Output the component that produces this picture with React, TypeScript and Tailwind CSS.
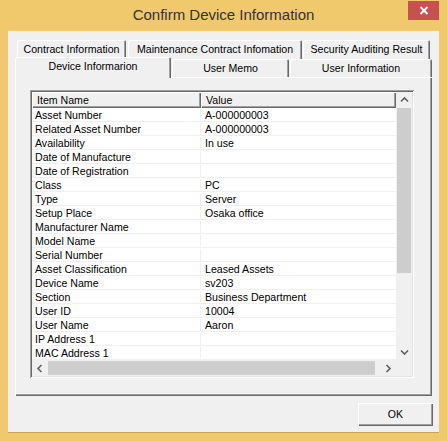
import React from 'react';

type Row = { name: string; value: string };

const rows: Row[] = [
  { name: 'Asset Number', value: 'A-000000003' },
  { name: 'Related Asset Number', value: 'A-000000003' },
  { name: 'Availability', value: 'In use' },
  { name: 'Date of Manufacture', value: '' },
  { name: 'Date of Registration', value: '' },
  { name: 'Class', value: 'PC' },
  { name: 'Type', value: 'Server' },
  { name: 'Setup Place', value: 'Osaka office' },
  { name: 'Manufacturer Name', value: '' },
  { name: 'Model Name', value: '' },
  { name: 'Serial Number', value: '' },
  { name: 'Asset Classification', value: 'Leased Assets' },
  { name: 'Device Name', value: 'sv203' },
  { name: 'Section', value: 'Business Department' },
  { name: 'User ID', value: '10004' },
  { name: 'User Name', value: 'Aaron' },
  { name: 'IP Address 1', value: '' },
  { name: 'MAC Address 1', value: '' },
];

const tabShadow =
  'shadow-[inset_1px_1px_0_#ffffff,inset_-1px_0_0_#696969,inset_-2px_0_0_#a0a0a0]';

function Chevron({ dir }: { dir: 'up' | 'down' | 'left' | 'right' }) {
  const pts = {
    up: '1,5.5 4.5,2 8,5.5',
    down: '1,2.5 4.5,6 8,2.5',
    left: '5.5,1 2,4.5 5.5,8',
    right: '2.5,1 6,4.5 2.5,8',
  }[dir];
  return (
    <svg width="9" height="9" viewBox="0 0 9 9">
      <polyline points={pts} fill="none" stroke="#606060" strokeWidth="1.6" />
    </svg>
  );
}

function BackTab({ label, width, ml }: { label: string; width: string; ml: string }) {
  return (
    <div
      className={`${width} ${ml} h-[19px] rounded-t-[2px] bg-[#f0f0f0] ${tabShadow} flex justify-center pt-[3px] leading-[13px]`}
    >
      {label}
    </div>
  );
}

export default function App() {
  return (
    <div
      className="w-[447px] h-[441px] bg-[#f0c96c] flex flex-col text-[10.6px] text-black overflow-hidden"
      style={{ fontFamily: '"Liberation Sans", Arial, sans-serif' }}
    >
      {/* title bar */}
      <div className="relative h-[31px] flex items-center justify-center">
        <span className="text-[15px] text-[#333333] pb-[1px]">Confirm Device Information</span>
        <div className="absolute right-[8px] top-[1px] w-[31px] h-[19px] bg-[#c75050] flex items-center justify-center">
          <svg width="10" height="9" viewBox="0 0 10 9">
            <path d="M1.5 1 L8.5 8 M8.5 1 L1.5 8" stroke="#ffffff" strokeWidth="2" />
          </svg>
        </div>
      </div>

      {/* client area */}
      <div className="mx-[8px] h-[402px] bg-[#f0f0f0] border-b border-[#c9a353] flex flex-col pl-[7px] pt-[9px]">
        {/* tab strip */}
        <div className="w-[417px] flex flex-col">
          <div className="flex h-[19px]">
            <BackTab label="Contract Information" width="w-[109px]" ml="ml-[2px]" />
            <BackTab label="Maintenance Contract Infomation" width="w-[174px]" ml="ml-[2px]" />
            <BackTab label="Security Auditing Result" width="w-[127px]" ml="ml-[1px]" />
          </div>
          <div className="flex h-[18px]">
            <div
              className={`relative z-10 w-[156px] h-[21px] -mt-[2px] rounded-t-[2px] bg-[#f0f0f0] ${tabShadow} flex justify-center pt-[3px] leading-[13px]`}
            >
              Device Informarion
            </div>
            <div
              className={`w-[117px] ml-[1px] h-[18px] rounded-t-[2px] bg-[#f0f0f0] ${tabShadow} flex justify-center pt-[3px] leading-[13px]`}
            >
              User Memo
            </div>
            <div
              className={`w-[142px] ml-[1px] h-[18px] rounded-t-[2px] bg-[#f0f0f0] ${tabShadow} flex justify-center pt-[3px] leading-[13px]`}
            >
              User Information
            </div>
          </div>
        </div>

        {/* tab panel */}
        <div className="w-[417px] h-[319px] bg-[#f0f0f0] shadow-[inset_1px_1px_0_#ffffff,inset_-1px_-1px_0_#696969,inset_-2px_-2px_0_#a0a0a0] pl-[15px] pt-[13px]">
          {/* list view */}
          <div className="w-[384px] h-[288px] p-[2px] bg-white shadow-[inset_1px_1px_0_#a0a0a0,inset_-1px_-1px_0_#ffffff,inset_2px_2px_0_#696969,inset_-2px_-2px_0_#e3e3e3]">
            <div className="flex">
              <div className="w-[364px] h-[268px] overflow-hidden flex flex-col">
                <div className="flex h-[16px] bg-[#f0f0f0] leading-[16px]">
                  <div className="w-[169px] pl-[5px] shadow-[inset_1px_1px_0_#ffffff,inset_-1px_-1px_0_#696969,inset_-2px_-2px_0_#a0a0a0]">
                    Item Name
                  </div>
                  <div className="flex-1 pl-[5px] shadow-[inset_1px_1px_0_#ffffff,inset_-1px_-1px_0_#696969,inset_-2px_-2px_0_#a0a0a0]">
                    Value
                  </div>
                </div>
                {rows.map((r) => (
                  <div key={r.name} className="flex h-[14px] shrink-0 border-b border-[#f0f0f0] pt-[1px] leading-[13px]">
                    <div className="w-[169px] pl-[3px] border-r border-[#f0f0f0] whitespace-nowrap">{r.name}</div>
                    <div className="flex-1 pl-[4px] whitespace-nowrap">{r.value}</div>
                  </div>
                ))}
              </div>
              {/* vertical scrollbar */}
              <div className="w-[16px] h-[268px] bg-[#f0f0f0] flex flex-col">
                <div className="h-[16px] flex items-center justify-center">
                  <Chevron dir="up" />
                </div>
                <div className="h-[165px] bg-[#cdcdcd] mx-[1px]" />
                <div className="flex-1" />
                <div className="h-[16px] flex items-center justify-center">
                  <Chevron dir="down" />
                </div>
              </div>
            </div>
            {/* horizontal scrollbar */}
            <div className="flex h-[16px]">
              <div className="w-[364px] bg-[#f0f0f0] flex items-center">
                <div className="w-[16px] flex justify-center">
                  <Chevron dir="left" />
                </div>
                <div className="w-[327px] h-[14px] bg-[#cdcdcd]" />
                <div className="flex-1" />
                <div className="w-[16px] flex justify-center">
                  <Chevron dir="right" />
                </div>
              </div>
              <div className="w-[16px] bg-[#f0f0f0]" />
            </div>
          </div>
        </div>

        {/* buttons */}
        <div className="flex justify-end pr-[6px] pt-[7px]">
          <div className="w-[75px] h-[23px] bg-[#f0f0f0] shadow-[inset_1px_1px_0_#ffffff,inset_-1px_-1px_0_#696969,inset_-2px_-2px_0_#a0a0a0] flex items-center justify-center">
            OK
          </div>
        </div>
      </div>
    </div>
  );
}
